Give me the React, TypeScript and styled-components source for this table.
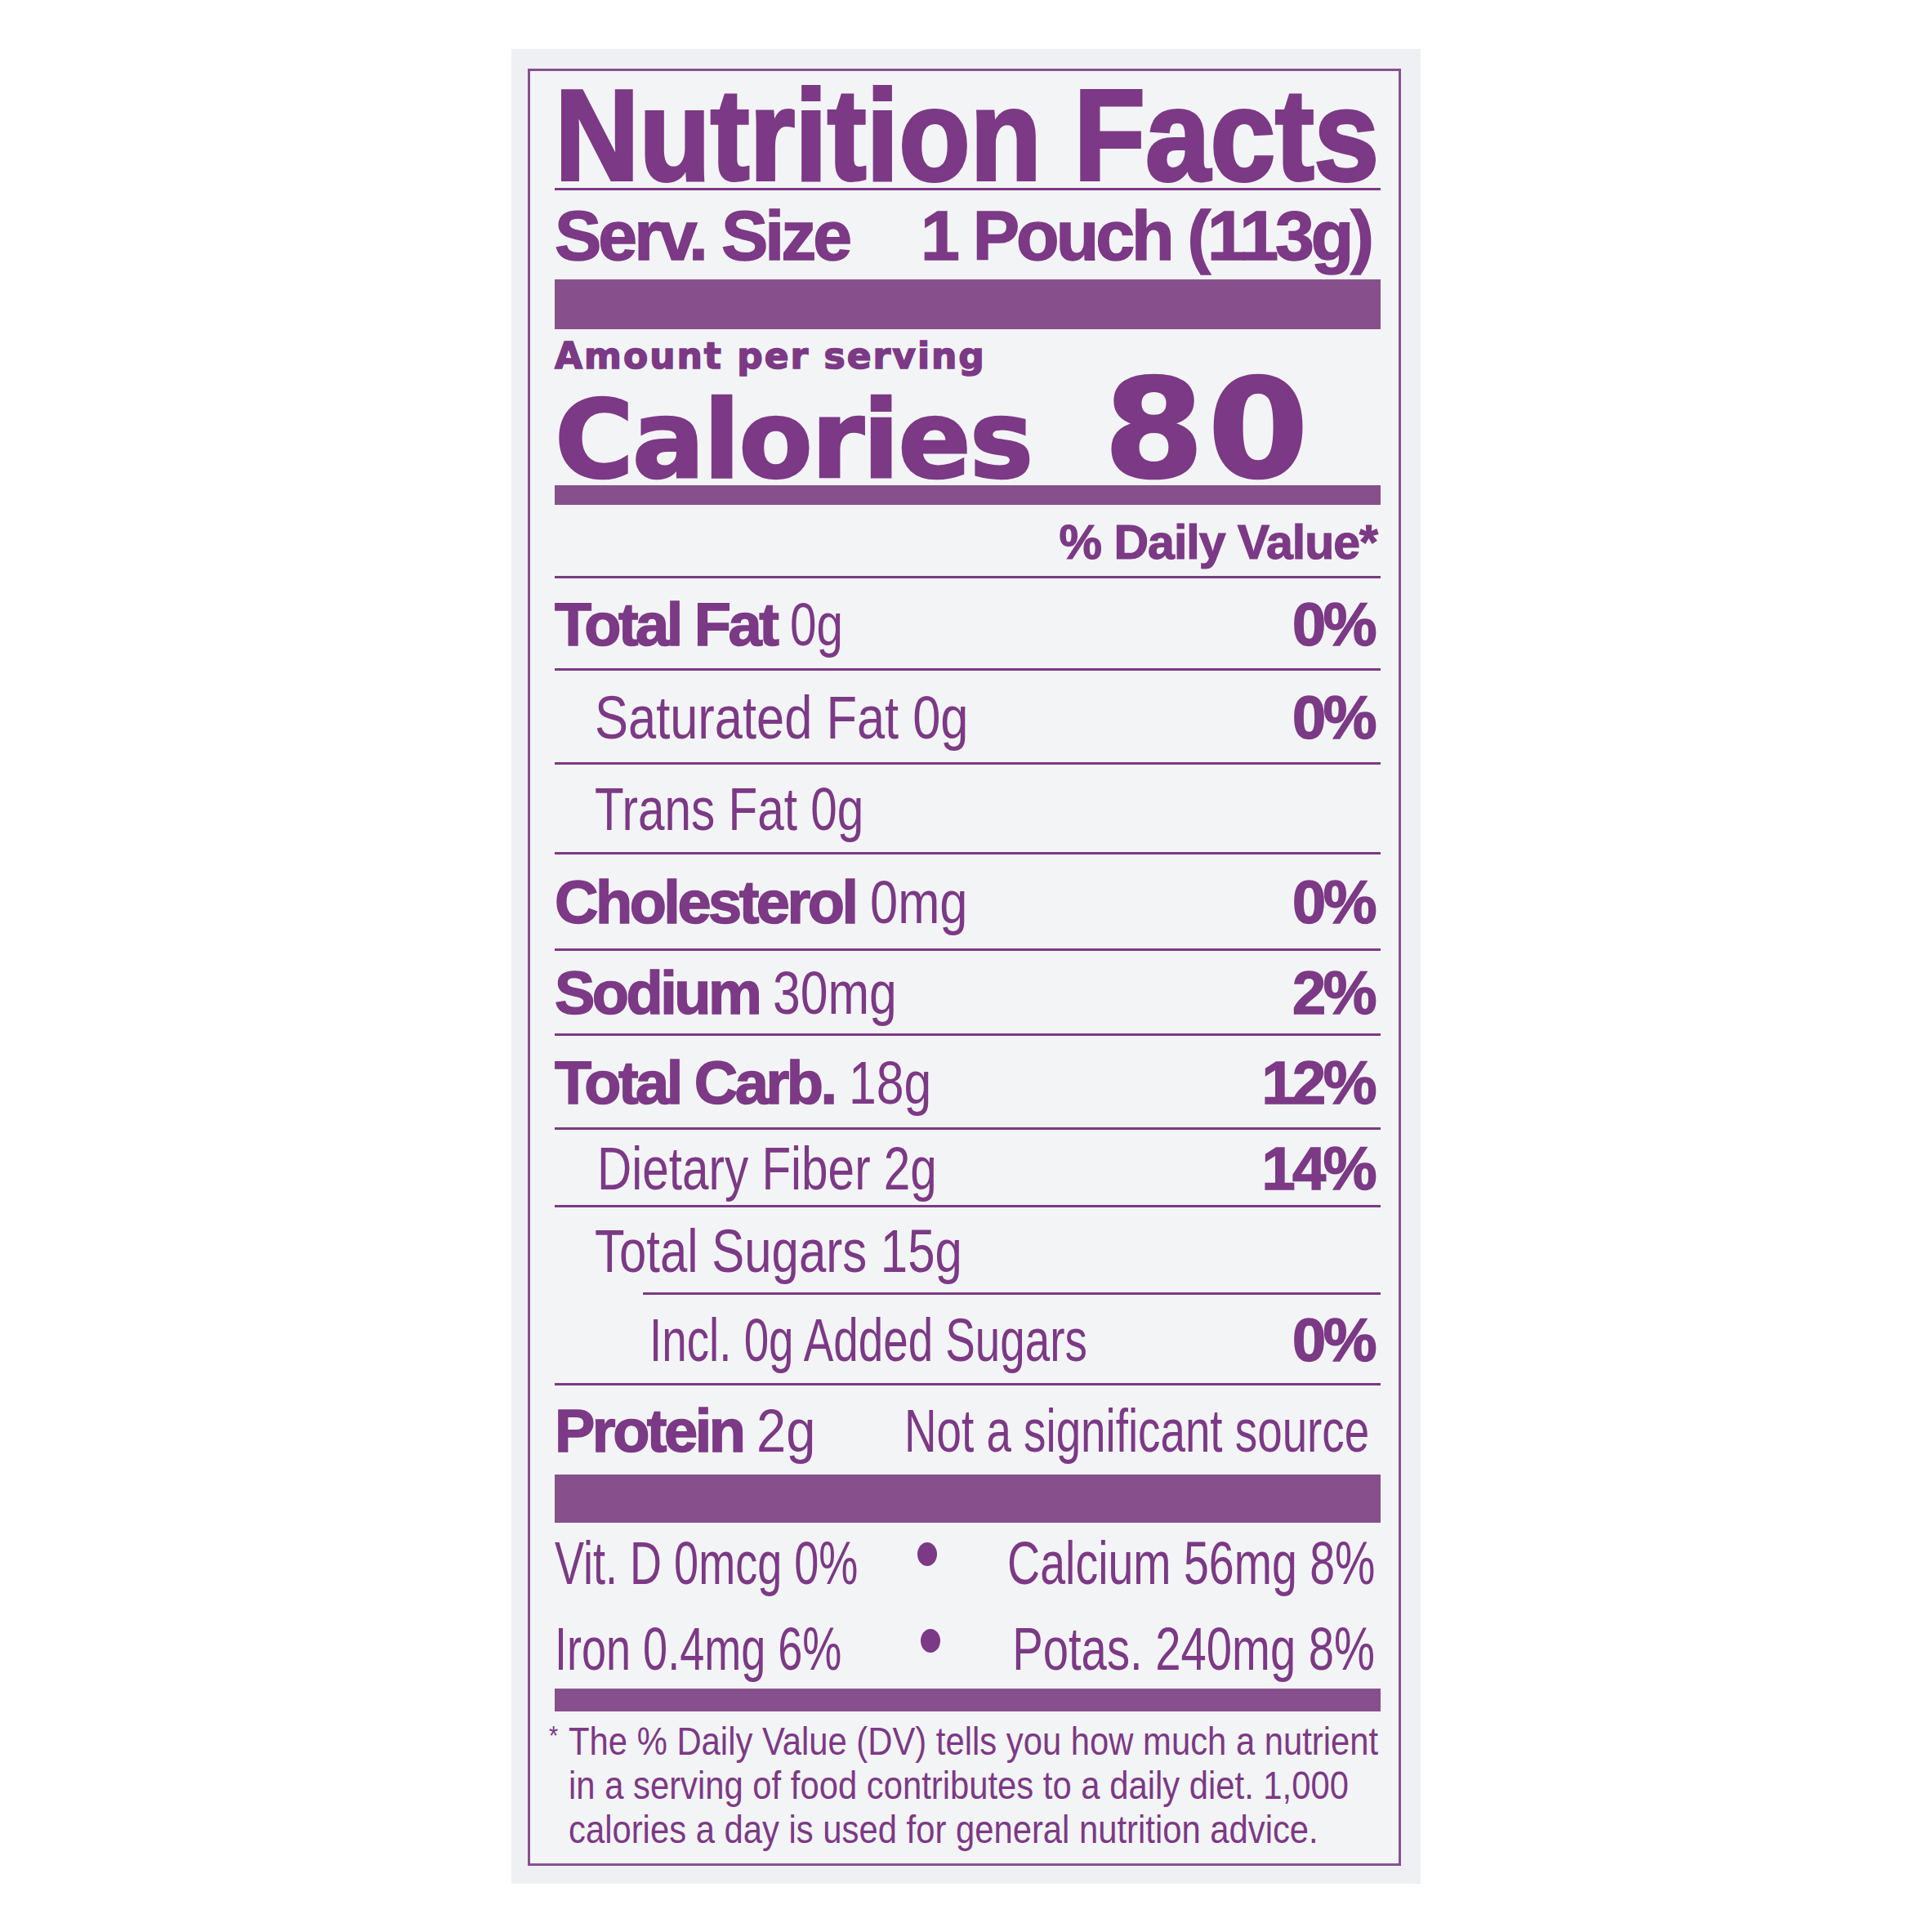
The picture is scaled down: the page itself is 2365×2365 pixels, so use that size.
import React from 'react';
import styled, { createGlobalStyle } from 'styled-components';

const INK = '#7c3985';
const BAR = '#87508d';

const Global = createGlobalStyle`
  html, body { margin: 0; padding: 0; background: #ffffff; }
  * { box-sizing: border-box; }
`;

const Page = styled.div`
  width: 2365px;
  height: 2365px;
  display: flex;
  align-items: center;
  justify-content: center;
  background: #ffffff;
`;

const Panel = styled.div`
  width: 1113px;
  height: 2246px;
  padding: 24px 24px 0 20px;
  background: #eff0f3;
`;

const Label = styled.section`
  width: 1069px;
  border: 3px solid ${BAR};
  background: #f3f4f6;
  padding: 1px 22px 15px 30px;
  color: ${INK};
  display: flex;
  flex-direction: column;
`;

const Title = styled.h1`
  margin: 0;
  padding-top: 12px;
  height: 142px;
  line-height: 130px;
  font-family: 'Liberation Sans', Arial, sans-serif;
  font-weight: 700;
  font-size: 158px;
  letter-spacing: 0;
  -webkit-text-stroke: 4px ${INK};
  white-space: nowrap;
  transform: scaleX(0.905);
  transform-origin: 2px 0;
`;

const Rule = styled.div<{ $indent?: number }>`
  height: 3px;
  background: ${INK};
  margin-left: ${(p) => p.$indent ?? 0}px;
`;

const Bar = styled.div<{ $h: number }>`
  height: ${(p) => p.$h}px;
  background: ${BAR};
`;

const ServRow = styled.div`
  display: flex;
  justify-content: space-between;
  padding: 10px 12px 9px 0;
  height: 109px;
  line-height: 90px;
  font-family: 'Liberation Sans', Arial, sans-serif;
  font-weight: 700;
  font-size: 86px;
  letter-spacing: -4px;
  -webkit-text-stroke: 1.5px ${INK};
  white-space: nowrap;
`;

const Amount = styled.div`
  padding-top: 8px;
  height: 58px;
  line-height: 50px;
  font-family: 'DejaVu Sans', sans-serif;
  font-weight: 700;
  font-size: 44px;
  letter-spacing: 2px;
  -webkit-text-stroke: 1.5px ${INK};
  white-space: nowrap;
`;

const CalRow = styled.div`
  display: flex;
  align-items: baseline;
  height: 133px;
  font-family: 'DejaVu Sans', sans-serif;
  font-weight: 700;
  white-space: nowrap;
`;

const CalWord = styled.span`
  font-size: 132px;
  line-height: 130px;
  letter-spacing: -2px;
  -webkit-text-stroke: 2.5px ${INK};
`;

const CalNum = styled.span`
  display: inline-block;
  font-size: 167px;
  line-height: 130px;
  letter-spacing: 4px;
  margin-left: 88px;
  -webkit-text-stroke: 2.5px ${INK};
  transform: scaleX(1.06);
  transform-origin: left center;
`;

const DVHead = styled.div`
  text-align: right;
  padding: 16px 4px 11px 0;
  height: 87px;
  line-height: 60px;
  font-family: 'Liberation Sans', Arial, sans-serif;
  font-weight: 700;
  font-size: 59px;
  letter-spacing: -1px;
  -webkit-text-stroke: 1.2px ${INK};
  white-space: nowrap;
`;

const Row = styled.div<{ $h: number; $indent: number }>`
  display: flex;
  align-items: center;
  justify-content: space-between;
  height: ${(p) => p.$h}px;
  padding: 4px 8px 0 ${(p) => p.$indent}px;
  white-space: nowrap;
`;

const RightSlot = styled.div`
  flex: 1;
  min-width: 0;
  display: flex;
  justify-content: flex-end;
`;

const Strong = styled.span`
  font-family: 'Liberation Sans', Arial, sans-serif;
  font-weight: 700;
  font-size: 74px;
  line-height: 74px;
  letter-spacing: -3.5px;
  -webkit-text-stroke: 1.5px ${INK};
`;

const Light = styled.span<{ $sx?: number; $right?: boolean }>`
  display: inline-block;
  flex-shrink: 0;
  font-family: 'Liberation Sans', Arial, sans-serif;
  font-weight: 400;
  font-size: 74px;
  line-height: 74px;
  transform: scaleX(${(p) => p.$sx ?? 0.8});
  transform-origin: ${(p) => (p.$right ? 'right' : 'left')} center;
`;

const Minerals = styled.div`
  display: grid;
  grid-template-columns: 436px 40px minmax(0, 1fr);
  grid-template-rows: 100px 103px;
  align-items: center;
  white-space: nowrap;
`;

const MinCell = styled.div<{ $right?: boolean; $shift?: number }>`
  min-width: 0;
  display: flex;
  justify-content: ${(p) => (p.$right ? 'flex-end' : 'flex-start')};
  padding-right: ${(p) => (p.$right ? 7 : 0)}px;
  padding-top: ${(p) => p.$shift ?? 0}px;
`;

const Dot = styled.span<{ $shift?: number; $dx?: number }>`
  justify-self: center;
  width: 24px;
  height: 29px;
  border-radius: 50%;
  background: ${INK};
  margin-bottom: ${(p) => 22 - (p.$shift ?? 0)}px;
  margin-left: ${(p) => (p.$dx ?? 0) * 2}px;
`;

const Foot = styled.div`
  padding: 2px 0 0 17px;
  font-family: 'Liberation Sans', Arial, sans-serif;
  font-size: 49px;
  line-height: 54px;
  white-space: nowrap;
`;

const FootLine = styled.div`
  transform: scaleX(0.853);
  transform-origin: left center;
`;

const Star = styled.span`
  display: inline-block;
  width: 28px;
  margin-left: -28px;
  font-size: 34px;
  vertical-align: 12px;
`;

const Source = styled(Light)`
  margin-right: 6px;
`;

type Nutrient = {
  bold?: string;
  light: string;
  sx: number;
  dv?: string;
  h: number;
  indent: number;
  ruleIndent?: number;
};

const nutrients: Nutrient[] = [
  { bold: 'Total Fat', light: '0g', sx: 0.79, dv: '0%', h: 110, indent: 0 },
  { light: 'Saturated Fat 0g', sx: 0.83, dv: '0%', h: 112, indent: 49 },
  { light: 'Trans Fat 0g', sx: 0.79, h: 107, indent: 49 },
  { bold: 'Cholesterol', light: '0mg', sx: 0.83, dv: '0%', h: 115, indent: 0 },
  { bold: 'Sodium', light: '30mg', sx: 0.82, dv: '2%', h: 101, indent: 0 },
  { bold: 'Total Carb.', light: '18g', sx: 0.82, dv: '12%', h: 112, indent: 0 },
  { light: 'Dietary Fiber 2g', sx: 0.79, dv: '14%', h: 92, indent: 52 },
  { light: 'Total Sugars 15g', sx: 0.81, h: 104, indent: 49, ruleIndent: 108 },
  { light: 'Incl. 0g Added Sugars', sx: 0.74, dv: '0%', h: 108, indent: 116 },
];

export default function App() {
  return (
    <>
      <Global />
      <Page>
        <Panel>
          <Label>
            <Title>Nutrition Facts</Title>
            <Rule />
            <ServRow>
              <span>Serv. Size</span>
              <span>1 Pouch (113g)</span>
            </ServRow>
            <Bar $h={61} />
            <Amount>Amount per serving</Amount>
            <CalRow>
              <CalWord>Calories</CalWord>
              <CalNum>80</CalNum>
            </CalRow>
            <Bar $h={24} />
            <DVHead>% Daily Value*</DVHead>
            <Rule />
            {nutrients.map((n) => (
              <React.Fragment key={n.light}>
                <Row $h={n.h} $indent={n.indent}>
                  <span>
                    {n.bold && <Strong>{n.bold} </Strong>}
                    <Light $sx={n.sx}>{n.light}</Light>
                  </span>
                  {n.dv && <Strong>{n.dv}</Strong>}
                </Row>
                <Rule $indent={n.ruleIndent} />
              </React.Fragment>
            ))}
            <Row $h={109} $indent={0}>
              <span>
                <Strong>Protein </Strong>
                <Light $sx={0.88}>2g</Light>
              </span>
              <RightSlot>
                <Source $sx={0.74} $right>Not a significant source</Source>
              </RightSlot>
            </Row>
            <Bar $h={59} />
            <Minerals>
              <MinCell><Light $sx={0.73}>Vit. D 0mcg 0%</Light></MinCell>
              <Dot />
              <MinCell $right><Light $sx={0.75} $right>Calcium 56mg 8%</Light></MinCell>
              <MinCell $shift={8}><Light $sx={0.73}>Iron 0.4mg 6%</Light></MinCell>
              <Dot $shift={8} $dx={4} />
              <MinCell $right $shift={8}><Light $sx={0.76} $right>Potas. 240mg 8%</Light></MinCell>
            </Minerals>
            <Bar $h={28} />
            <Foot>
              <FootLine>
                <Star>*</Star>The % Daily Value (DV) tells you how much a nutrient
              </FootLine>
              <FootLine>in a serving of food contributes to a daily diet. 1,000</FootLine>
              <FootLine>calories a day is used for general nutrition advice.</FootLine>
            </Foot>
          </Label>
        </Panel>
      </Page>
    </>
  );
}
